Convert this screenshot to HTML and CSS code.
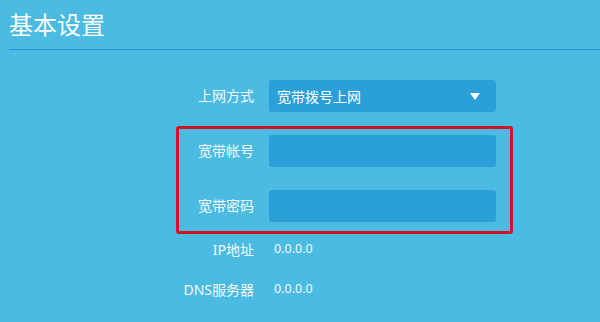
FILE: index.html
```html
<!DOCTYPE html>
<html lang="zh-CN">
<head>
<meta charset="utf-8">
<title>基本设置</title>
<link rel="stylesheet" href="styles.css">
</head>
<body>
<div class="page">
  <header class="header">
    <h1 class="title">基本设置</h1>
  </header>
  <form class="form">
    <div class="row row-first">
      <label class="label">上网方式</label>
      <div class="control select">
        <span class="select-text">宽带拨号上网</span>
        <span class="caret"></span>
      </div>
    </div>
    <div class="highlight">
      <div class="row">
        <label class="label">宽带帐号</label>
        <div class="control input"></div>
      </div>
      <div class="row row-gap">
        <label class="label">宽带密码</label>
        <div class="control input"></div>
      </div>
    </div>
    <div class="row text-row ip-row">
      <span class="label">IP地址</span>
      <span class="value">0.0.0.0</span>
    </div>
    <div class="row text-row dns-row">
      <span class="label">DNS服务器</span>
      <span class="value">0.0.0.0</span>
    </div>
  </form>
</div>
</body>
</html>
```

FILE: styles.css
```css
* { box-sizing: border-box; }
html, body {
  margin: 0;
  padding: 0;
}
body {
  width: 600px;
  height: 322px;
  overflow: hidden;
  background: #4bbbe1;
  font-family: "Noto Sans", "Noto Sans CJK SC", sans-serif;
  color: #f4fafd;
}
.page {
  height: 322px;
}
.header {
  margin-left: 9px;
  height: 50px;
  border-bottom: 1px solid #2697d2;
  display: flex;
  align-items: center;
}
.title {
  margin: 0 0 2px 0;
  font-size: 24px;
  font-weight: normal;
  color: #ffffff;
  font-family: "Noto Sans CJK SC", sans-serif;
  line-height: 1;
}
.form {
  margin: 0;
  padding-left: 150px;
  display: flex;
  flex-direction: column;
}
.row {
  display: flex;
  align-items: center;
  gap: 15px;
}
.row-first {
  margin-top: 30px;
}
.label {
  width: 104px;
  flex: none;
  text-align: right;
  font-size: 14px;
  line-height: 20px;
  color: #f4fafd;
}
.control {
  width: 227px;
  height: 32px;
  border-radius: 3px;
  background: #2a9fd8;
}
.select {
  display: flex;
  align-items: center;
  justify-content: space-between;
  padding: 0 16px 0 8px;
}
.select-text {
  font-size: 14px;
  color: #ffffff;
  font-family: "Noto Sans CJK SC", sans-serif;
}
.caret {
  width: 0;
  height: 0;
  border-left: 5px solid transparent;
  border-right: 5px solid transparent;
  border-top: 7px solid #ffffff;
}
.highlight {
  margin: 14px 0 0 26px;
  width: 337px;
  border: 3px solid #cc1720;
  border-radius: 3px;
  padding: 6px 0 9px 0;
}
.highlight .row {
  margin-left: -29px;
}
.highlight .row-gap {
  margin-top: 23px;
}
.text-row {
  height: 20px;
}
.ip-row {
  margin-top: 6px;
}
.dns-row {
  margin-top: 20px;
}
.value {
  padding-left: 5px;
  font-size: 12.5px;
  line-height: 20px;
  margin-top: -2px;
  color: #f4fafd;
}
```
